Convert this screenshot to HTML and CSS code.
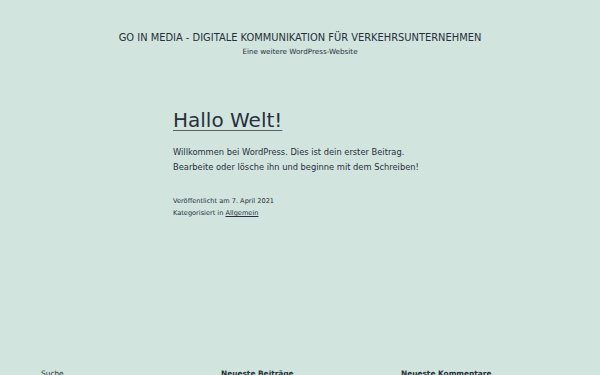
FILE: index.html
```html
<!DOCTYPE html>
<html lang="de">
<head>
    <meta charset="UTF-8">
    <meta name="viewport" content="width=device-width, initial-scale=1.0">
    <title>GO IN MEDIA</title>
    <link rel="stylesheet" href="styles.css">
</head>
<body>
    <header class="site-header">
        <p class="site-title">GO IN MEDIA - DIGITALE KOMMUNIKATION FÜR VERKEHRSUNTERNEHMEN</p>
        <p class="site-description">Eine weitere WordPress-Website</p>
    </header>

    <main class="site-main">
        <article class="entry">
            <h1 class="entry-title"><a href="#">Hallo Welt!</a></h1>
            <div class="entry-content">
                <p>Willkommen bei WordPress. Dies ist dein erster Beitrag. Bearbeite oder lösche ihn und beginne mit dem Schreiben!</p>
            </div>
            <footer class="entry-meta">
                <span class="posted-on">Veröffentlicht am 7. April 2021</span>
                <span class="cat-links">Kategorisiert in <a href="#">Allgemein</a></span>
            </footer>
        </article>
    </main>

    <aside class="widget-area">
        <section class="widget">
            <label class="search-label">Suche</label>
        </section>
        <section class="widget">
            <h2 class="widget-title">Neueste Beiträge</h2>
        </section>
        <section class="widget">
            <h2 class="widget-title">Neueste Kommentare</h2>
        </section>
    </aside>
</body>
</html>
```

FILE: styles.css
```css
body {
    margin: 0;
    background-color: #d1e4dd;
    color: #28303d;
    font-family: "DejaVu Sans", sans-serif;
}
a {
    color: #28303d;
}
.site-header {
    text-align: center;
    padding-top: 31px;
}
.site-title {
    margin: 0;
    font-size: 9.9px;
    line-height: 14px;
    text-transform: uppercase;
}
.site-description {
    margin: 1px 0 0;
    font-size: 7.2px;
    line-height: 11px;
}
.entry {
    width: 254px;
    margin: 0 auto;
    padding-top: 51px;
}
.entry-title {
    margin: 0;
    font-size: 20px;
    font-weight: normal;
    line-height: 24px;
}
.entry-title a {
    text-decoration-thickness: 1px;
    text-decoration-color: #5a616c;
    text-underline-offset: 3px;
}
.entry-content p {
    margin: 13px 0 0;
    font-size: 8.3px;
    line-height: 14.5px;
}
.entry-meta {
    margin-top: 21px;
    font-size: 6.6px;
    line-height: 12px;
}
.entry-meta span {
    display: block;
}
.entry-meta a {
    text-decoration-thickness: 1px;
}
.widget-area {
    display: grid;
    grid-template-columns: repeat(3, 1fr);
    gap: 22px;
    padding: 0 41px;
    margin-top: 150px;
}
.search-label {
    display: block;
    font-size: 7.4px;
    line-height: 10px;
}
.widget-title {
    margin: 0;
    font-size: 7.4px;
    line-height: 10px;
}
```
